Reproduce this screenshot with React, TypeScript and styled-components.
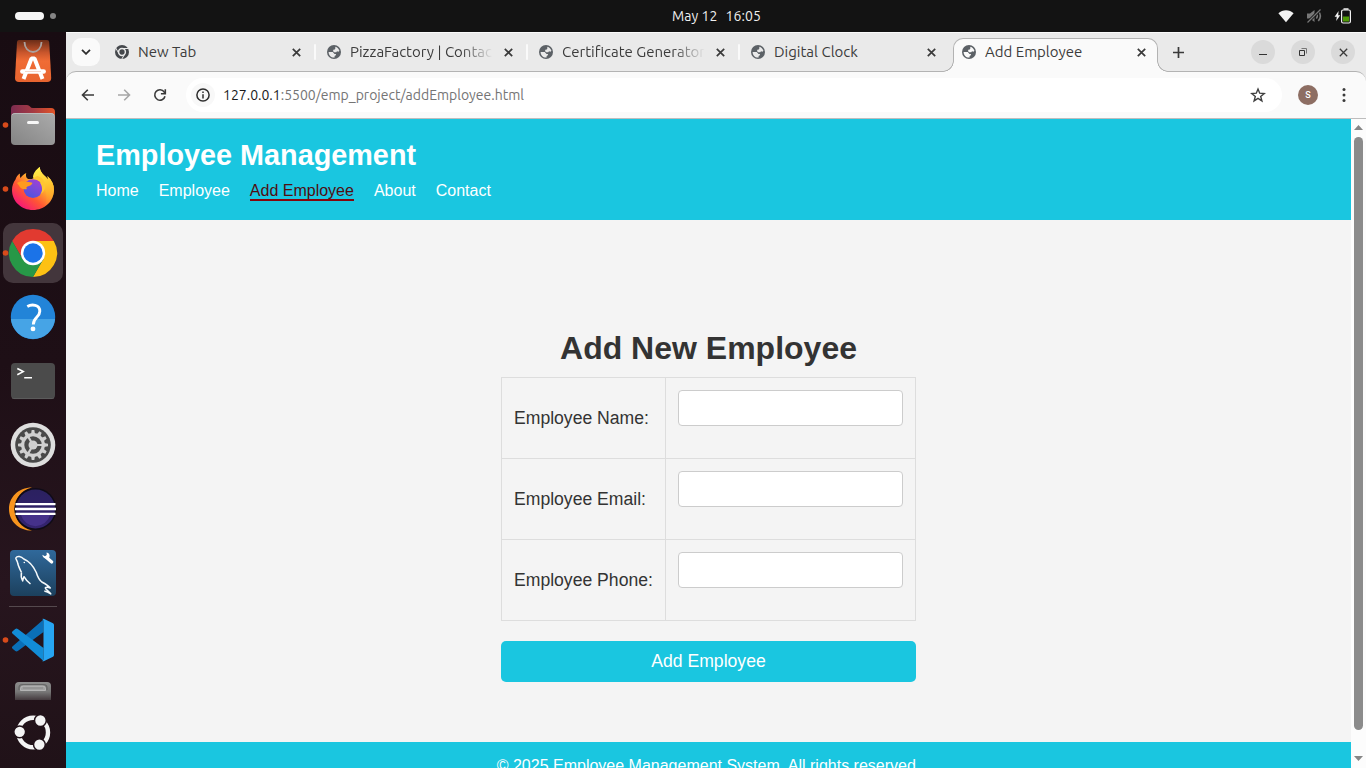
import React from 'react';
import styled, { createGlobalStyle } from 'styled-components';

const uiFont = "Ubuntu, 'Noto Sans', sans-serif";
const cyan = '#1ac6e0';
const line = '#b3b3b3';

const GlobalStyle = createGlobalStyle`
  *, *::before, *::after { box-sizing: border-box; }
  body { margin: 0; overflow: hidden; }
  h1, h2, p, ul { margin: 0; padding: 0; }
  svg { display: block; flex: none; }
  button, input { font: inherit; border: 0; padding: 0; }
`;

const Desktop = styled.div`
  display: grid;
  grid-template: 32px 736px / 66px 1300px;
  width: 1366px;
  height: 768px;
  overflow: hidden;
  font-family: ${uiFont};
`;

/* ---------- system bar ---------- */

const TopBar = styled.header`
  grid-column: 1 / -1;
  display: grid;
  grid-template-columns: 1fr auto 1fr;
  align-items: center;
  background: #131313;
  color: #efefef;
`;

const Workspaces = styled.div`
  display: flex;
  align-items: center;
  gap: 6px;
  padding-left: 15px;
`;

const WorkspaceMark = styled.span<{ $active?: boolean }>`
  width: ${p => (p.$active ? 29 : 6)}px;
  height: ${p => (p.$active ? 8 : 6)}px;
  border-radius: 4px;
  background: ${p => (p.$active ? '#f6f6f6' : '#858585')};
`;

const Clock = styled.div`
  display: flex;
  gap: 8px;
  margin-left: 67px;
  font-size: 14px;
  line-height: 20px;
  letter-spacing: 0.08px;
  white-space: nowrap;
`;

const StatusIcons = styled.div`
  display: flex;
  justify-content: flex-end;
  align-items: center;
  gap: 12px;
  padding-right: 15px;
`;

/* ---------- dock ---------- */

const Dock = styled.nav`
  display: flex;
  flex-direction: column;
  overflow: hidden;
  background: linear-gradient(#180c12, #1e0f16 45%, #27151e 75%, #201218);
`;

const DockApps = styled.div`
  display: flex;
  flex-direction: column;
  margin-top: -3px;
`;

const DockItem = styled.div<{ $height?: number; $active?: boolean }>`
  display: flex;
  align-items: center;
  justify-content: center;
  height: ${p => p.$height ?? 64}px;
  flex: none;
  background: ${p => (p.$active ? '#43363c' : 'none')};
  ${p => p.$active && 'height: 60px; margin: 2px 3px; border-radius: 10px; & > svg { margin: 0 -3px; }'}
`;

const DockRule = styled.hr`
  width: 48px;
  height: 1px;
  margin: 1px auto;
  border: 0;
  flex: none;
  background: #55494e;
`;

/* ---------- browser ---------- */

const Browser = styled.div`
  display: grid;
  grid-template-rows: 39px 48px 649px;
  background: #eaeaea;
  min-width: 0;
`;

const TabStrip = styled.div`
  display: flex;
  align-items: flex-start;
  padding: 5px 11px 0 6px;
  border-top: 1px solid #fafafa;
  color: #3c3c3c;
`;

const TabSearch = styled.button`
  display: grid;
  place-items: center;
  width: 28px;
  height: 28px;
  margin-right: 3px;
  border-radius: 9px;
  background: #fafafa;
`;

const Tab = styled.div<{ $active?: boolean; $last?: boolean }>`
  position: relative;
  display: flex;
  align-items: center;
  height: ${p => (p.$active ? 34 : 28)}px;
  width: ${p => (p.$active ? 205 : p.$last ? 214 : 212)}px;
  padding: 0 ${p => (p.$active ? 11 : p.$last ? 17 : 0)}px ${p => (p.$active ? 7 : 0)}px ${p => (p.$active ? 7 : 11)}px;
  ${p => p.$active && `
    z-index: 1;
    background: #fafafa;
    border: 1px solid ${line};
    border-bottom: 0;
    border-radius: 10px 10px 0 0;
    &::before, &::after {
      content: '';
      position: absolute;
      bottom: 0;
      width: 11px;
      height: 11px;
    }
    &::before {
      right: 100%;
      background: radial-gradient(circle at 0 0, #eaeaea 9.5px, ${line} 10px, ${line} 10.5px, #fafafa 11px);
    }
    &::after {
      left: 100%;
      background: radial-gradient(circle at 100% 0, #eaeaea 9.5px, ${line} 10px, ${line} 10.5px, #fafafa 11px);
    }
  `}
`;

const TabIcon = styled.span`
  display: grid;
  place-items: center;
  width: 16px;
  height: 16px;
  margin-right: 8px;
`;

const TabTitle = styled.span<{ $fade?: boolean }>`
  flex: 1;
  overflow: hidden;
  white-space: nowrap;
  font-size: 15px;
  line-height: 20px;
  margin-right: 11px;
  ${p => p.$fade && 'mask-image: linear-gradient(to right, #000 calc(100% - 32px), transparent);'}
`;

const TabDivider = styled.span`
  width: 2px;
  height: 16px;
  margin: 0 -1px 0 13px;
  border-radius: 1px;
  background: #fafafa;
`;

const NewTab = styled.div`
  display: grid;
  place-items: center;
  width: 28px;
  height: 28px;
  margin-left: 6px;
`;

const WindowButtons = styled.div`
  display: flex;
  gap: 16px;
  margin: 2px 0 0 auto;
`;

const WindowButton = styled.button`
  display: grid;
  place-items: center;
  width: 24px;
  height: 24px;
  border-radius: 50%;
  background: #dadada;
`;

const Toolbar = styled.div`
  display: flex;
  align-items: center;
  padding: 0 14px 0 12px;
  border-top: 1px solid ${line};
  border-bottom: 1px solid #bdbdbd;
  border-radius: 10px 10px 0 0;
  background: #fafafa;
`;

const ToolButton = styled.span`
  display: grid;
  place-items: center;
  width: 20px;
  height: 20px;
  margin-right: 16px;
`;

const Omnibox = styled.div`
  display: flex;
  align-items: center;
  width: 1096px;
  height: 34px;
  padding: 0 16px 0 5px;
  border-radius: 17px;
  background: #fff;
`;

const SiteInfo = styled.span`
  display: grid;
  place-items: center;
  width: 24px;
  height: 24px;
  margin-right: 8px;
  border-radius: 50%;
  background: #f8f8f8;
`;

const Url = styled.span`
  flex: 1;
  color: #747474;
  font-size: 14px;
  line-height: 20px;
  white-space: nowrap;
`;

const UrlHost = styled.span`
  color: #1a1a1a;
`;

const Avatar = styled.span`
  display: grid;
  place-items: center;
  width: 20px;
  height: 20px;
  margin: 0 24px 0 16px;
  border-radius: 50%;
  background: #8d6e63;
  color: #fff;
  font: 500 9px/20px Roboto, sans-serif;
`;

/* ---------- web page ---------- */

const Viewport = styled.div`
  display: grid;
  grid-template-columns: 1285px 15px;
  height: 649px;
  overflow: hidden;
`;

const Page = styled.div`
  display: grid;
  grid-template-rows: 101px 522px 48px;
  background: #f4f4f4;
  color: #333;
  font-family: 'Liberation Sans', Arial, sans-serif;
  font-size: 16px;
`;

const SiteHeader = styled.header`
  padding: 20px 30px;
  background: ${cyan};
  color: #fff;
`;

const SiteName = styled.h1`
  font-size: 28.8px;
  line-height: 33px;
`;

const SiteNav = styled.ul`
  display: flex;
  gap: 20px;
  margin-top: 10px;
  line-height: 18px;
  list-style: none;
`;

const NavLink = styled.li<{ $active?: boolean }>`
  height: 19px;
  color: ${p => (p.$active ? '#4f0d10' : '#fff')};
  border-bottom: 2px solid ${p => (p.$active ? '#85060c' : 'transparent')};
`;

const Main = styled.main`
  display: flex;
  flex-direction: column;
  align-items: center;
  padding-top: 110px;
`;

const FormTitle = styled.h2`
  font-size: 32px;
  line-height: 37px;
`;

const Form = styled.div`
  width: 415px;
  margin-top: 10px;
  font-size: 17.6px;
`;

const FieldTable = styled.div`
  border: 1px solid #ddd;
  border-bottom: 0;
`;

const FieldRow = styled.div`
  display: grid;
  grid-template-columns: 164px 249px;
  height: 81px;
  border-bottom: 1px solid #ddd;
`;

const FieldLabel = styled.label`
  display: flex;
  align-items: center;
  padding-left: 12px;
  border-right: 1px solid #ddd;
  line-height: 20px;
`;

const FieldInput = styled.input`
  width: 225px;
  height: 36px;
  margin: 12px;
  border: 1px solid #ccc;
  border-radius: 4px;
  background: #fff;
`;

const SubmitButton = styled.button`
  display: block;
  width: 100%;
  height: 41px;
  margin-top: 20px;
  padding-bottom: 2px;
  border-radius: 5px;
  background: ${cyan};
  color: #fff;
  line-height: 20px;
`;

const SiteFooter = styled.footer`
  padding-top: 15px;
  background: ${cyan};
  color: #fff;
  line-height: 18px;
  text-align: center;
`;

const Scrollbar = styled.div`
  display: flex;
  flex-direction: column;
  align-items: center;
  justify-content: space-between;
  height: 649px;
  padding: 6px 0 7px;
  background: #fcfcfc;
`;

const ScrollThumb = styled.div`
  width: 9px;
  height: 593px;
  margin-bottom: 19px;
  border-radius: 5px;
  background: #8b8b8b;
`;

/* ---------- drawings ---------- */

const DockSvg = ({ children, running, h = 64 }: { children: React.ReactNode; running?: boolean; h?: number }) => (
  <svg width="66" height={h} viewBox={`0 0 66 ${h}`} fill="none">
    {running && <circle cx="5.5" cy="32" r="2.8" fill="#d84b1b" />}
    {children}
  </svg>
);

const SoftwareIcon = () => (
  <DockSvg>
    <defs>
      <linearGradient id="bag" x1="0" y1="0" x2="0" y2="1">
        <stop offset="0" stopColor="#6b2d18" />
        <stop offset=".3" stopColor="#c9562c" />
        <stop offset=".5" stopColor="#f06c35" />
        <stop offset="1" stopColor="#e8642f" />
      </linearGradient>
    </defs>
    <path d="M19 11h28q2 0 2.200 2l2 36q0 4-4 4H19q-4 0-4-4l2-36q.2-2 2-2z" fill="url(#bag)" />
    <path d="M24.500 13c0 6 3.800 10 8.500 10s8.500-4 8.500-10" stroke="#aaa09d" strokeWidth="1.800" />
    <path d="M23.500 50L31.500 29.500h3L42.500 50" stroke="#fff" strokeWidth="4" strokeLinejoin="bevel" />
    <path d="M22.300 42.500h21.400" stroke="#fff" strokeWidth="4.400" strokeLinecap="round" />
    <path d="M25 42.500h16" stroke="#f3cdbd" strokeWidth=".8" />
  </DockSvg>
);

const FilesIcon = () => (
  <DockSvg running>
    <defs>
      <linearGradient id="folderBack" x1="11" y1="0" x2="55" y2="0" gradientUnits="userSpaceOnUse">
        <stop stopColor="#7c2c50" /><stop offset=".5" stopColor="#a53a43" /><stop offset="1" stopColor="#e45527" />
      </linearGradient>
      <linearGradient id="folderFront" x1="0" y1="1" x2="1" y2="0">
        <stop stopColor="#848484" /><stop offset="1" stopColor="#ababab" />
      </linearGradient>
    </defs>
    <path d="M11 16q0-4 4-4h12q2 0 3 1.500t3 1.500h18q4 0 4 4v14H11z" fill="url(#folderBack)" />
    <rect x="11" y="20" width="44" height="32" rx="4" fill="url(#folderFront)" />
    <path d="M12 22q1-1.500 3-1.500h36q2 0 3 1.500" stroke="#c2c2c2" strokeWidth=".8" />
    <rect x="27" y="28" width="12" height="3" rx="1.500" fill="#f7f7f7" />
  </DockSvg>
);

const FirefoxIcon = () => (
  <DockSvg running>
    <defs>
      <linearGradient id="foxBody" x1="48" y1="14" x2="18" y2="50" gradientUnits="userSpaceOnUse">
        <stop stopColor="#ffe23e" /><stop offset=".35" stopColor="#ffb12c" /><stop offset=".65" stopColor="#ff5634" /><stop offset="1" stopColor="#f5117e" />
      </linearGradient>
      <linearGradient id="foxFlame" x1="40" y1="10" x2="50" y2="48" gradientUnits="userSpaceOnUse">
        <stop stopColor="#fff04c" /><stop offset=".5" stopColor="#ffc32f" /><stop offset="1" stopColor="#ff8a2a" stopOpacity=".1" />
      </linearGradient>
      <linearGradient id="foxGlobe" x1="38" y1="22" x2="28" y2="40" gradientUnits="userSpaceOnUse">
        <stop stopColor="#a240d6" /><stop offset="1" stopColor="#4d55dd" />
      </linearGradient>
    </defs>
    <path d="M15.500 22.500C16 20 18 17.500 20 16.500c-.3 2 0 3.500.6 4.500 1.300-2 3-4 5.600-5-.8 3.300.3 5.300 2 6h5l3-1c-2.600-3.800.4-8.500 3.600-11 .2 4.600 2.600 6.500 5.600 9.500l2.800 3-.8-3.500c4.600 4.200 6.700 9 6.600 14C53.800 44.500 44.500 53 33 53S12 44.500 12 33c0-4 1.300-7.500 3.500-10.500z" fill="url(#foxBody)" />
    <path d="M33 20.500c0-4 3-8 6.800-10.500.2 4.600 2.600 6.500 5.600 9.500l2.800 3-.8-3.500c4.600 4.200 6.700 9 6.600 14-.2 7-4 14-10 17 4-7 3-16-1-22-2-3-5-5-10-7.500z" fill="url(#foxFlame)" />
    <circle cx="33" cy="31.500" r="9.500" fill="url(#foxGlobe)" />
    <path d="M17 26c3-2.500 7-2 10-1.200 2.500.2 4 .4 5.500 1.200-1 2.300-3 3-5 3.500-1.200.3-1.500 1.500-.5 2.500-4 1-7-1-8-3.500z" fill="#ff9a1f" />
    <path d="M31 22.500c4-1 8.500 1 11 3.500l-2-.2c2.500 3.500 2.800 8 .6 11.200 3-1.700 5-5 4.700-9-.4-5-4-8-8-9z" fill="#ffc632" />
  </DockSvg>
);

const ChromeIcon = () => (
  <DockSvg running>
    <path d="M12.200 20A24 24 0 0 1 53.800 20H33L22.600 38z" fill="#e13a30" />
    <path d="M53.800 20A24 24 0 0 1 33 56L43.400 38L33 20z" fill="#fdc114" />
    <path d="M33 56A24 24 0 0 1 12.200 20L22.600 38h20.800z" fill="#279847" />
    <circle cx="33" cy="32" r="12.200" fill="#fff" />
    <circle cx="33" cy="32" r="9.700" fill="#1b73e8" />
  </DockSvg>
);

const HelpIcon = () => (
  <DockSvg>
    <circle cx="33" cy="32" r="22.200" fill="#2284d8" />
    <path d="M10.900 34h44.200A22.200 22.200 0 0 1 10.900 34z" fill="#46a4e6" />
    <path d="M27.300 21.500c4.500-2.500 12.500-2 12.500 4.800 0 6-6.500 6.200-6.500 13.200" stroke="#fff" strokeWidth="2.900" />
    <circle cx="33" cy="43.900" r="2.400" fill="#fff" />
  </DockSvg>
);

const TerminalIcon = () => (
  <DockSvg>
    <rect x="11" y="14" width="44" height="36" rx="4" fill="#4b4b4b" />
    <path d="M12 49q1 .6 3 .6h36q2 0 3-.6" stroke="#666" strokeWidth=".7" />
    <path d="M17.300 19.500l5.900 3.100-5.900 3.100M24.200 28.700h7.800" stroke="#fff" strokeWidth="1.600" />
  </DockSvg>
);

const teeth = Array.from({ length: 12 }, (_, i) => i * 30);

const SettingsIcon = () => (
  <DockSvg>
    <circle cx="33" cy="32" r="22.300" fill="#dedede" />
    <circle cx="33" cy="32" r="17.800" fill="#494949" />
    <g fill="#cfcfcf">
      {teeth.map(a => <path key={a} d="M31 21l.7-4h2.600l.7 4z" transform={`rotate(${a} 33 32)`} />)}
    </g>
    <circle cx="33" cy="32" r="10.300" stroke="#cfcfcf" strokeWidth="3.200" />
    <circle cx="33" cy="32" r="4.500" fill="#d0d0d0" />
    <path d="M33 32h10M33 32l-5-8.700M33 32l-5 8.700" stroke="#cfcfcf" strokeWidth="2.200" />
  </DockSvg>
);

const EclipseIcon = () => (
  <DockSvg>
    <defs>
      <linearGradient id="moon" x1="0" y1="0" x2="0" y2="1">
        <stop stopColor="#2b2160" /><stop offset=".6" stopColor="#2f2168" /><stop offset="1" stopColor="#35246f" />
      </linearGradient>
    </defs>
    <path d="M32 10.400C18 10.400 9 20.500 9 32s9 21.600 23 21.600C21 51 14.500 42 14.500 32S21 13 32 10.400z" fill="#f7941e" />
    <circle cx="35.500" cy="32" r="21" fill="#0f0b17" />
    <circle cx="35.500" cy="32" r="19.500" fill="url(#moon)" />
    <path d="M21 38h29a15 15 0 0 1-29 0z" fill="#45318a" />
    <path d="M15.500 27.100h40M15 32h41M15.500 36.800h40" stroke="#fff" strokeWidth="2.300" />
  </DockSvg>
);

const WorkbenchIcon = () => (
  <DockSvg>
    <defs>
      <linearGradient id="wb" x1="0" y1="0" x2="0" y2="1">
        <stop stopColor="#30699b" /><stop offset="1" stopColor="#1c405d" />
      </linearGradient>
    </defs>
    <rect x="10" y="9" width="46" height="46" rx="4" fill="url(#wb)" />
    <path d="M21.500 31.500c-1.500-3-3-6-3.700-9-.3-2.500-2-4-2-5.500 1.500-2.700 5.500-1.500 8 1 6 2.500 10 8 12.500 13.500 1.200 4 2.500 7 5.500 9.500 3 1.500 6.500 3.500 8.500 6-2-1-5-1.200-5 0 0 1.300 3.500 3 5.500 6-2.500-1.800-4.500-2.700-6.500-3M21.500 31.500c-.8 3 -.3 5.500 1.200 8.500.3-1.800.6-3 1.300-4.300 1.500 2.800 4 5.300 6.500 7.300" stroke="#f5f9fb" strokeWidth="1.500" strokeLinejoin="round" />
    <circle cx="24.300" cy="21.500" r=".8" fill="#fff" />
    <path d="M46.500 16.500l5.200 4.500" stroke="#fff" strokeWidth="3.200" strokeLinecap="round" />
    <path d="M42.300 13.700l2.700 1.500 1.800-1.200-.3-2.600c2.500.3 3.600 2.300 3 4.500-1 2.800-6.700 2.200-7.200-2.200z" fill="#fff" />
  </DockSvg>
);

const CodeIcon = () => (
  <DockSvg running>
    <path d="M12.300 40.500l3 2.500q1.200.9 2.500 0L43.500 24V11.500L12.400 38.500q-1 1 0 2z" fill="#0a6fb8" />
    <path d="M12.300 23.500l3-2.600q1.200-.9 2.500 0L43.500 40v13L12.400 25.500q-1-1 0-2z" fill="#128cd6" />
    <path d="M42 11q1-.6 2.200 0l8.800 4.300q1 .5 1 1.700v30q0 1.200-1 1.700L44.200 53q-1.200.6-2.200 0 1.500.2 1.500-2V13q0-2-1.500-2z" fill="#27a5f2" />
  </DockSvg>
);

const DriveIcon = () => (
  <DockSvg h={28}>
    <defs>
      <linearGradient id="drive" x1="0" y1="0" x2="0" y2="1">
        <stop stopColor="#8e8e8e" /><stop offset=".55" stopColor="#777" /><stop offset="1" stopColor="#443a3e" />
      </linearGradient>
    </defs>
    <path d="M15 28V14q0-4 4-4h28q4 0 4 4v14z" fill="url(#drive)" />
    <path d="M19 18v-2q0-3.500 3.500-3.500h21q3.500 0 3.500 3.500v2" stroke="#666" strokeWidth="1.200" />
    <path d="M20.500 18.500v-2q0-2.500 3-2.500h19q3 0 3 2.500v2z" fill="#a2a2a2" stroke="#c4c4c4" strokeWidth=".7" />
    <path d="M23 16h20" stroke="#808080" strokeWidth=".8" />
  </DockSvg>
);

const UbuntuIcon = () => (
  <DockSvg h={66}>
    <circle cx="33.200" cy="32.500" r="14.800" stroke="#f4f4f4" strokeWidth="4.400" />
    <g fill="#f4f4f4" stroke="#211219" strokeWidth="1.500">
      <circle cx="19.700" cy="31.800" r="5.900" />
      <circle cx="40.400" cy="20.500" r="5.900" />
      <circle cx="39.400" cy="44.600" r="5.900" />
    </g>
  </DockSvg>
);

const ChromeGlyph = () => (
  <svg width="14" height="14" viewBox="0 0 14 14" fill="none">
    <circle cx="7" cy="7" r="7" fill="#45484c" />
    <circle cx="7" cy="7" r="3.400" stroke="#eaeaea" strokeWidth="1.500" />
    <path d="M7 3.500h6.500M4 8.700L.8 3.100M10 8.700L6.800 14" stroke="#eaeaea" strokeWidth="1" />
  </svg>
);

const GlobeGlyph = ({ land }: { land: string }) => (
  <svg width="14" height="14" viewBox="0 0 14 14">
    <circle cx="7" cy="7" r="7" fill="#5c6166" />
    <path d="M8.300 1.700c2 .5 3.600 2 4.100 4.100l-.9.900-1.500-.4-.7.900H7.200L5.900 5.900l.8-1.300h1.200l.4-1z" fill={land} />
    <path d="M1.600 6.900l4.200.2 1.700 1.800 1.300.2.300 1-1.500 1v1.300c-3.200.4-5.900-2-6-5.500z" fill={land} />
  </svg>
);

const CloseIcon = ({ size = 9, width = 1.7 }: { size?: number; width?: number }) => (
  <svg width={size} height={size} viewBox="0 0 9 9" stroke="#3a3a3a" strokeWidth={width}>
    <path d="M.8.8l7.400 7.400M8.200.8L.8 8.200" />
  </svg>
);

const WifiIcon = () => (
  <svg width="16" height="14" viewBox="0 0 16 14"><path d="M8 13.300L.4 4.200C4.500.2 11.500.2 15.600 4.200z" fill="#f2f2f2" /></svg>
);

const MutedIcon = () => (
  <svg width="16" height="16" viewBox="0 0 16 16" fill="none" stroke="#777">
    <path d="M1 5.500h3L8.500 2v12L4 10.500H1z" fill="#777" stroke="none" />
    <path d="M10.300 5.500c1.200 1.500 1.200 3.500 0 5M12.300 3c2.500 3 2.500 7 0 10" strokeWidth="1.600" />
    <path d="M1.500 14.500l13-13" stroke="#131313" strokeWidth="3" />
    <path d="M1.500 14.500l13-13" strokeWidth="1.300" />
  </svg>
);

const BatteryIcon = () => (
  <svg width="17" height="16" viewBox="0 0 17 16" fill="none">
    <path d="M4.600 3L.6 8.800h2.200L2.200 13L6.200 7.300H4.200z" fill="#f2f2f2" />
    <rect x="7.600" y="2" width="8.800" height="13" rx="1.500" stroke="#f2f2f2" strokeWidth="1.200" />
    <path d="M9.500 1h5" stroke="#f2f2f2" strokeWidth="1.500" />
    <rect x="9" y="8.500" width="6" height="5" fill="#4e9a06" />
  </svg>
);

const BackIcon = ({ color }: { color: string }) => (
  <svg width="14" height="12" viewBox="0 0 14 12" fill="none" stroke={color} strokeWidth="1.600">
    <path d="M6.800.8L1.500 6l5.300 5.200M1.500 6H13" />
  </svg>
);

const ForwardIcon = ({ color }: { color: string }) => (
  <svg width="14" height="12" viewBox="0 0 14 12" fill="none" stroke={color} strokeWidth="1.600">
    <path d="M7.200.8L12.500 6l-5.300 5.200M12.500 6H1" />
  </svg>
);

const ReloadIcon = () => (
  <svg width="14" height="14" viewBox="0 0 14 14" fill="none" stroke="#3a3a3a" strokeWidth="1.600">
    <path d="M12 8.200a5.200 5.200 0 1 1-.8-4.200l1 1.200" />
    <path d="M12.300 1.200v4.500H7.900" />
  </svg>
);

const InfoIcon = () => (
  <svg width="14" height="14" viewBox="0 0 14 14" fill="none" stroke="#2c2c2c" strokeWidth="1.500">
    <circle cx="7" cy="7" r="6.100" />
    <path d="M7 6.200v4.300M7 3.400V5" />
  </svg>
);

const StarIcon = () => (
  <svg width="16" height="16" viewBox="0 0 16 16" fill="none" stroke="#3f3f3f" strokeWidth="1.400">
    <path d="M8 2l1.700 4.200 4.500.3-3.500 2.900 1.200 4.500L8 11.400l-3.900 2.500 1.200-4.500L1.800 6.500l4.500-.3z" />
  </svg>
);

const MenuDots = () => (
  <svg width="4" height="16" viewBox="0 0 4 16" fill="#3a3a3a">
    <circle cx="2" cy="2.500" r="1.500" /><circle cx="2" cy="8" r="1.500" /><circle cx="2" cy="13.500" r="1.500" />
  </svg>
);

const ScrollArrow = ({ down }: { down?: boolean }) => (
  <svg width="9" height="5" viewBox="0 0 9 5"><path d={down ? 'M0 0h9L4.500 5z' : 'M0 5h9L4.500 0z'} fill="#868686" /></svg>
);

const tabs = [
  { title: 'New Tab' },
  { title: 'PizzaFactory | Contact', fade: true },
  { title: 'Certificate Generator', fade: true },
  { title: 'Digital Clock' },
  { title: 'Add Employee' },
];

const links = ['Home', 'Employee', 'Add Employee', 'About', 'Contact'];
const fields = ['Employee Name:', 'Employee Email:', 'Employee Phone:'];

export default function App() {
  return (
    <Desktop>
      <GlobalStyle />
      <TopBar>
        <Workspaces>
          <WorkspaceMark $active />
          <WorkspaceMark />
        </Workspaces>
        <Clock><span>May 12</span><span>16:05</span></Clock>
        <StatusIcons><WifiIcon /><MutedIcon /><BatteryIcon /></StatusIcons>
      </TopBar>

      <Dock>
        <DockApps>
          <DockItem><SoftwareIcon /></DockItem>
          <DockItem><FilesIcon /></DockItem>
          <DockItem><FirefoxIcon /></DockItem>
          <DockItem $active><ChromeIcon /></DockItem>
          <DockItem><HelpIcon /></DockItem>
          <DockItem><TerminalIcon /></DockItem>
          <DockItem><SettingsIcon /></DockItem>
          <DockItem><EclipseIcon /></DockItem>
          <DockItem><WorkbenchIcon /></DockItem>
        </DockApps>
        <DockRule />
        <DockItem><CodeIcon /></DockItem>
        <DockItem $height={28}><DriveIcon /></DockItem>
        <DockItem $height={66}><UbuntuIcon /></DockItem>
      </Dock>

      <Browser>
        <TabStrip>
          <TabSearch>
            <svg width="10" height="6" viewBox="0 0 10 6" fill="none" stroke="#2e2e2e" strokeWidth="1.800"><path d="M1 .8l4 4 4-4" /></svg>
          </TabSearch>
          {tabs.map((t, i) => (
            <Tab key={t.title} $active={i === 4} $last={i === 3}>
              <TabIcon>{i === 0 ? <ChromeGlyph /> : <GlobeGlyph land={i === 4 ? '#fafafa' : '#eaeaea'} />}</TabIcon>
              <TabTitle $fade={t.fade}>{t.title}</TabTitle>
              <CloseIcon />
              {i < 3 && <TabDivider />}
            </Tab>
          ))}
          <NewTab>
            <svg width="11" height="11" viewBox="0 0 11 11" stroke="#3a3a3a" strokeWidth="1.700"><path d="M5.500 0v11M0 5.500h11" /></svg>
          </NewTab>
          <WindowButtons>
            <WindowButton>
              <svg width="8" height="8" viewBox="0 0 8 8" stroke="#333"><path d="M0 6.500h8" /></svg>
            </WindowButton>
            <WindowButton>
              <svg width="8" height="8" viewBox="0 0 8 8" fill="none" stroke="#333"><path d="M.5 2.500h5v5h-5z" /><path d="M2.500.5h5v5" stroke="#777" /></svg>
            </WindowButton>
            <WindowButton><CloseIcon size={9} width={1.3} /></WindowButton>
          </WindowButtons>
        </TabStrip>

        <Toolbar>
          <ToolButton><BackIcon color="#3a3a3a" /></ToolButton>
          <ToolButton><ForwardIcon color="#a6a6a6" /></ToolButton>
          <ToolButton><ReloadIcon /></ToolButton>
          <Omnibox>
            <SiteInfo><InfoIcon /></SiteInfo>
            <Url><UrlHost>127.0.0.1</UrlHost>:5500/emp_project/addEmployee.html</Url>
            <StarIcon />
          </Omnibox>
          <Avatar>S</Avatar>
          <MenuDots />
        </Toolbar>

        <Viewport>
          <Page>
            <SiteHeader>
              <SiteName>Employee Management</SiteName>
              <SiteNav>
                {links.map(l => <NavLink key={l} $active={l === 'Add Employee'}>{l}</NavLink>)}
              </SiteNav>
            </SiteHeader>
            <Main>
              <FormTitle>Add New Employee</FormTitle>
              <Form>
                <FieldTable>
                  {fields.map(f => (
                    <FieldRow key={f}>
                      <FieldLabel>{f}</FieldLabel>
                      <FieldInput aria-label={f} />
                    </FieldRow>
                  ))}
                </FieldTable>
                <SubmitButton>Add Employee</SubmitButton>
              </Form>
            </Main>
            <SiteFooter>© 2025 Employee Management System. All rights reserved.</SiteFooter>
          </Page>
          <Scrollbar>
            <ScrollArrow />
            <ScrollThumb />
            <ScrollArrow down />
          </Scrollbar>
        </Viewport>
      </Browser>
    </Desktop>
  );
}
